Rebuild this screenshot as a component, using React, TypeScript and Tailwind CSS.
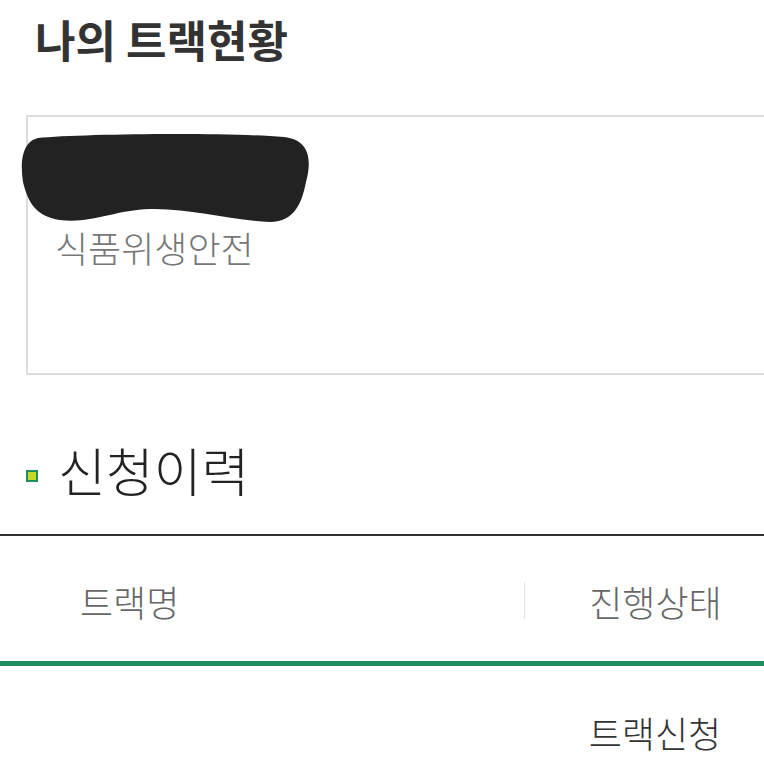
import React from "react";

const font = { fontFamily: '"Noto Sans CJK KR", "Noto Sans", sans-serif' };

const Redaction = () => (
    <svg className="absolute left-[-8px] top-[15px]" width="292" height="94" viewBox="0 0 292 94" xmlns="http://www.w3.org/2000/svg">
        <path
            fill="#222222"
            d="M18 6 C60 2, 200 0, 264 5 C290 8, 292 28, 286 50 C282 70, 275 90, 250 90 C210 88, 170 76, 130 77 C95 78, 70 92, 40 88 C15 84, 8 70, 3 50 C0 30, 2 10, 18 6 Z"
        />
    </svg>
);

export default function App() {
    return (
        <div className="w-[764px] h-[778px] overflow-hidden bg-white" style={font}>
            <div className="w-[786px]">
                <h1 className="pl-[35px] pt-[17px] text-[44px] leading-none font-bold text-[#333333]">나의 트랙현황</h1>

                <div className="ml-[26px] mt-[54px] w-[760px] h-[260px] border-2 border-[#dddddd] relative">
                    <Redaction />
                    <p className="pl-[27px] pt-[112px] text-[36px] leading-none font-light text-[#777777]">식품위생안전</p>
                </div>

                <div className="flex items-start pl-[26px] mt-[69px]">
                    <span className="mt-[26px] w-[12px] h-[12px] bg-[#c6d92a] border-2 border-[#1f8f5a]"></span>
                    <h2 className="ml-[20px] text-[52px] leading-none font-light text-[#222222]">신청이력</h2>
                </div>

                <div className="mt-[38px] border-t-2 border-[#333333]">
                    <div className="grid grid-cols-[524px_262px] h-[130px] pt-[4px] items-center border-b-[5px] border-[#1d8f5e]">
                        <div className="pl-[80px] text-[36px] leading-none font-light text-[#666666]">트랙명</div>
                        <div className="flex items-center">
                            <span className="w-[1px] h-[37px] bg-[#e2e2e2]"></span>
                            <span className="flex-1 text-center text-[36px] leading-none font-light text-[#666666]">진행상태</span>
                        </div>
                    </div>
                    <div className="grid grid-cols-[524px_262px] h-[132px] items-center">
                        <div></div>
                        <div className="text-center text-[36px] leading-none font-light text-[#333333]">트랙신청</div>
                    </div>
                </div>
            </div>
        </div>
    );
}
